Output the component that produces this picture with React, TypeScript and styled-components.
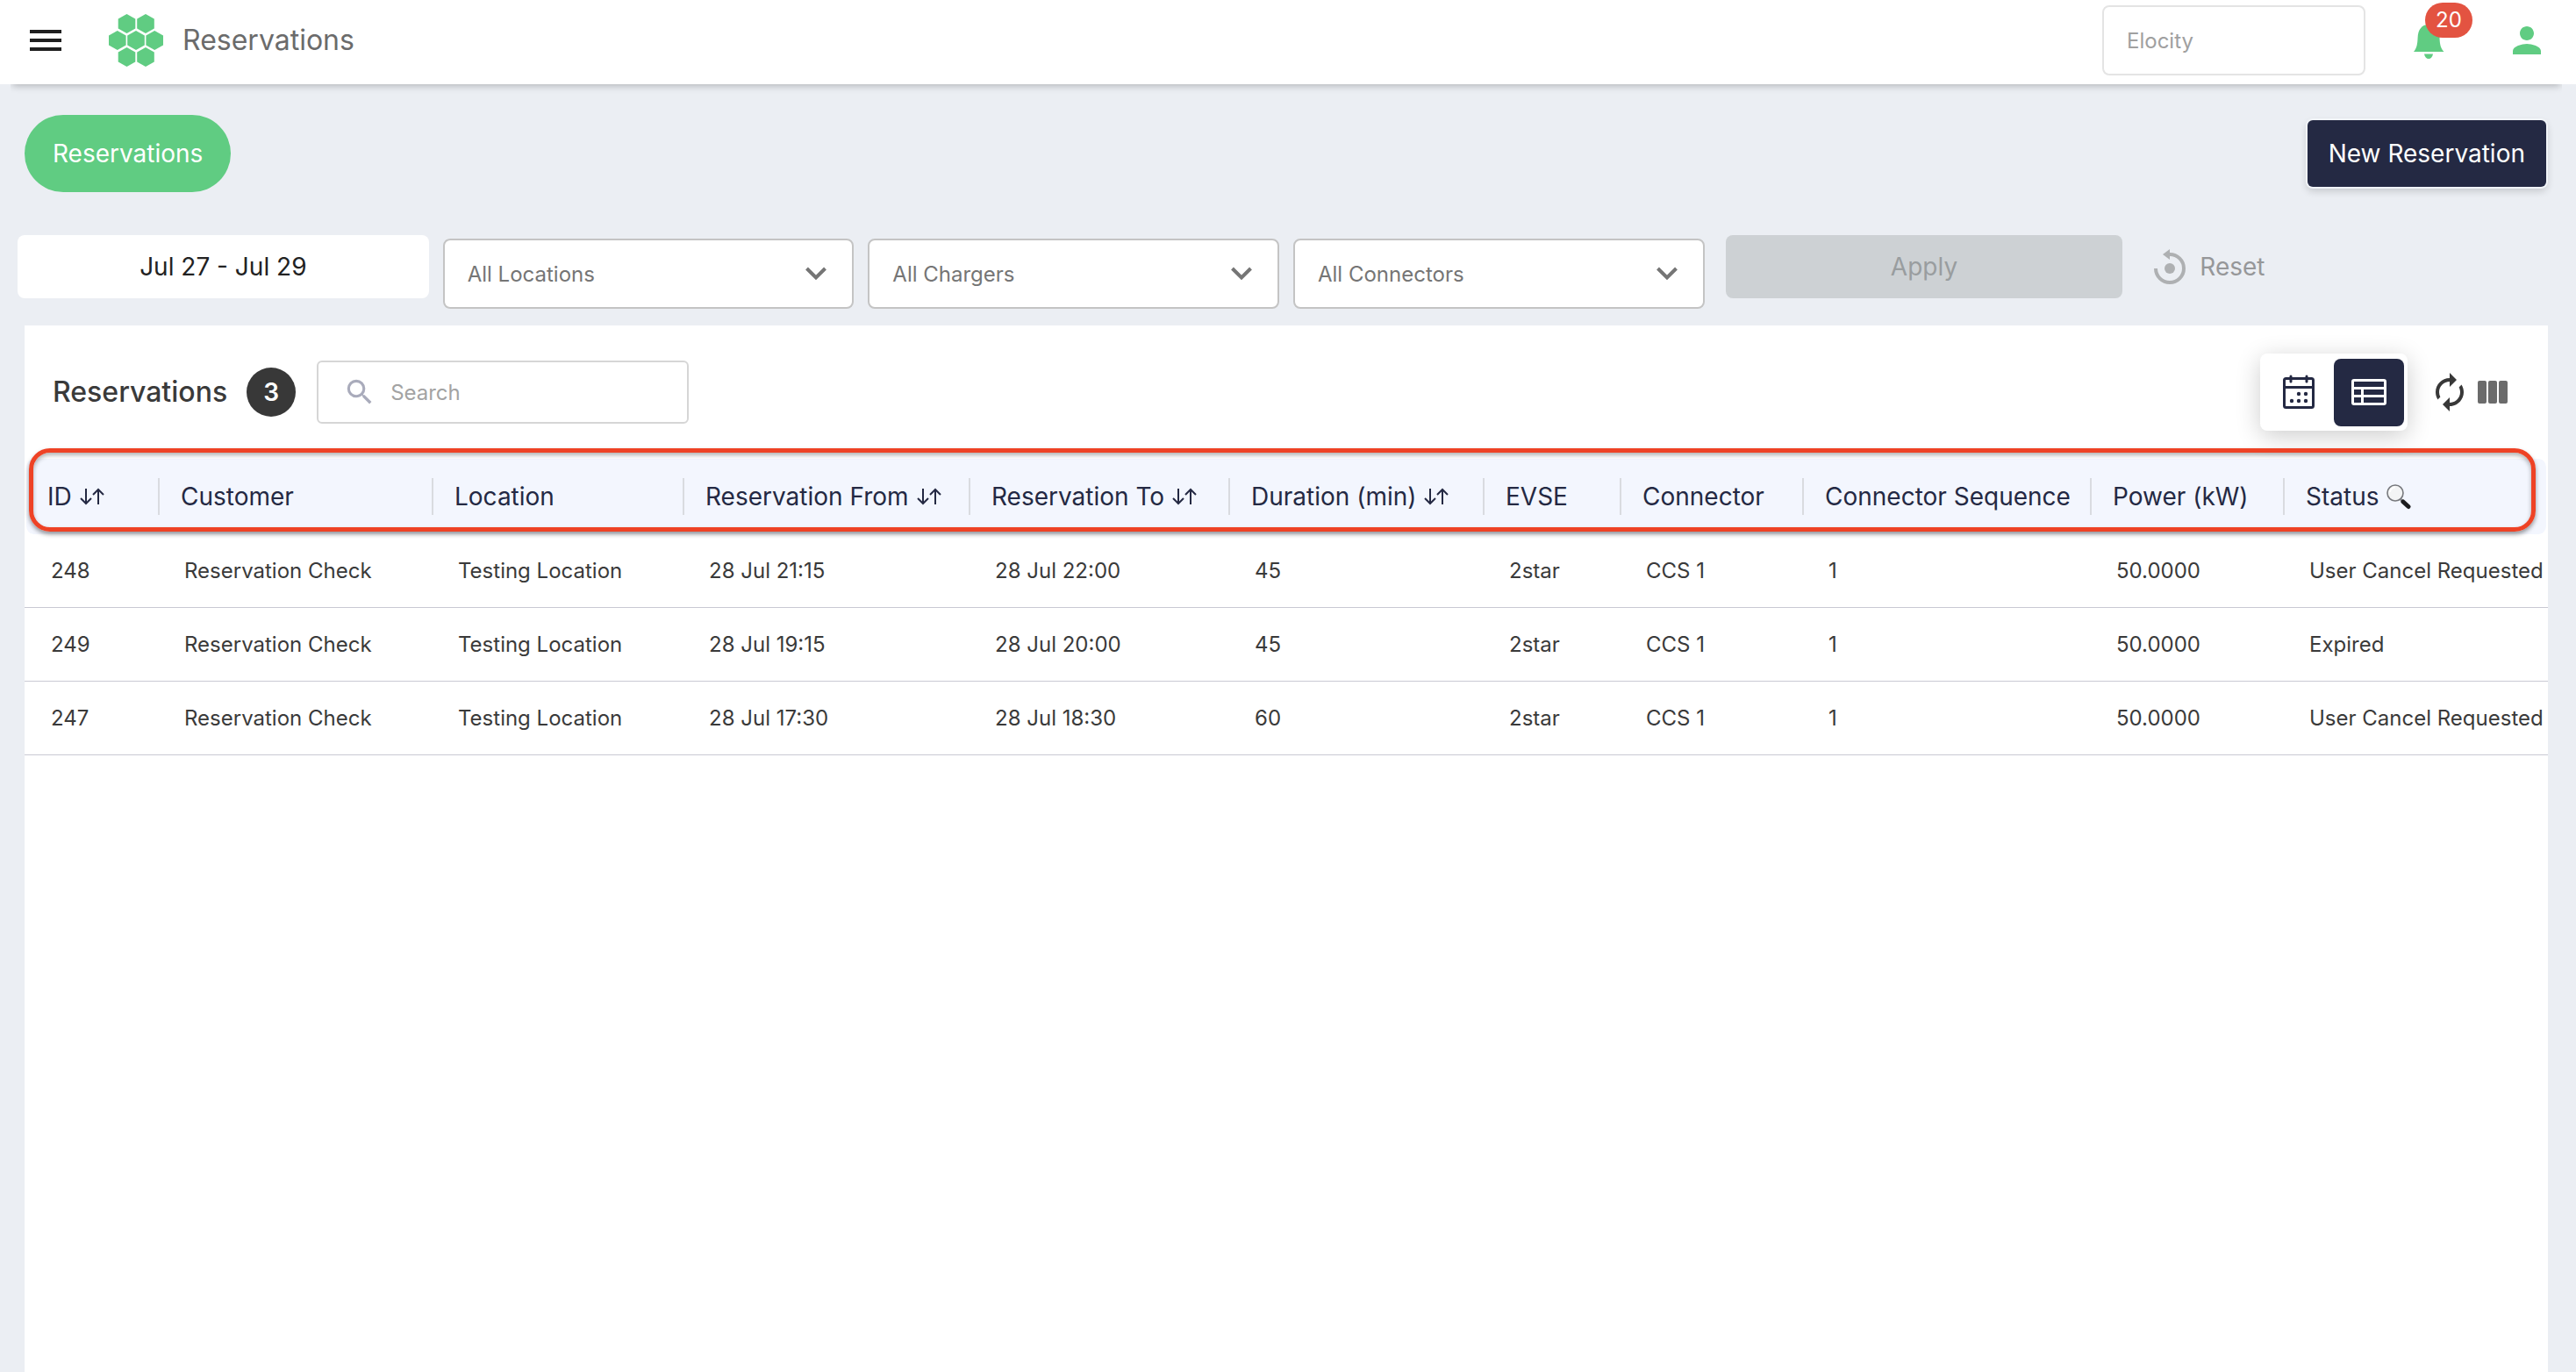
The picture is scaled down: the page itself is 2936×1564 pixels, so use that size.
import React from "react";
import styled, { createGlobalStyle } from "styled-components";
import { MdMenu, MdPerson, MdSearch, MdAutorenew } from "react-icons/md";

const color = {
  page: "#ebeef3",
  green: "#60cc82",
  navy: "#242943",
  red: "#e35341",
  outline: "#ee4225",
  ink: "#3a3a3a",
  headerRow: "#f3f6fe",
  line: "#c9c9d3",
};

const GlobalStyle = createGlobalStyle`
  *, *::before, *::after { box-sizing: border-box; }
  body {
    margin: 0;
    background: ${color.page};
    font-family: Inter, "Liberation Sans", sans-serif;
    color: ${color.ink};
  }
  button, input, select { font-family: inherit; }
`;

const Page = styled.div`
  display: flex;
  flex-direction: column;
  min-height: 100vh;
`;

const Header = styled.header`
  padding: 0 16px 0 12px;
  background: #fff;
`;

const AppBar = styled.div`
  display: flex;
  align-items: center;
  height: 96px;
  padding: 0 16px 4px;
  background: #fff;
  box-shadow: 0 4px 8px -2px rgba(0, 0, 0, 0.24);
  clip-path: inset(0 0 -16px 0);
`;

const IconButton = styled.button<{ $tint: string }>`
  position: relative;
  display: flex;
  padding: 0;
  border: 0;
  background: none;
  color: ${(p) => p.$tint};
  cursor: pointer;
`;

const Brand = styled.div`
  display: flex;
  align-items: center;
  gap: 22px;
  margin-left: 48px;
`;

const PageTitle = styled.h1`
  margin: 0;
  font-size: 32px;
  line-height: 40px;
  font-weight: 400;
  color: #6b6b6b;
`;

const Account = styled.div`
  display: flex;
  align-items: center;
  margin-left: auto;
`;

const TenantInput = styled.input`
  width: 300px;
  height: 80px;
  margin-right: 48px;
  padding: 0 26px;
  border: 2px solid #e4e4e4;
  border-radius: 8px;
  background: #fff;
  font-size: 24px;
  &::placeholder { color: #a0a0a0; opacity: 1; }
`;

const Alerts = styled(IconButton)`
  margin-right: 64px;
`;

const AlertCount = styled.span`
  position: absolute;
  top: -19px;
  left: 20px;
  width: 54px;
  border-radius: 20px;
  background: ${color.red};
  color: #fff;
  font-size: 24px;
  line-height: 40px;
  text-align: center;
`;

const TabRow = styled.div`
  display: flex;
  align-items: center;
  justify-content: space-between;
  padding: 35px 34px 0 28px;
`;

const Tab = styled.button`
  height: 88px;
  padding: 0 32px;
  border: 0;
  border-radius: 44px;
  background: ${color.green};
  color: #fff;
  font-size: 28px;
`;

const NewButton = styled.button`
  height: 76px;
  padding: 0 24px;
  border: 0;
  border-radius: 6px;
  background: ${color.navy};
  color: #fff;
  font-size: 28px;
  box-shadow: 0 0 0 2px #f1f4f8, 0 4px 8px 1px rgba(0, 0, 0, 0.16);
`;

const Filters = styled.form`
  display: grid;
  grid-template-columns: repeat(6, 1fr);
  align-items: start;
  padding: 49px 16px 19px 12px;
`;

const FilterCell = styled.div<{ $inset?: number; $drop?: boolean }>`
  display: flex;
  align-items: center;
  padding: ${(p) => (p.$drop ? 4 : 0)}px ${(p) => p.$inset ?? 8}px 0;
`;

const DateButton = styled.button`
  width: 100%;
  height: 72px;
  border: 0;
  border-radius: 8px;
  background: #fff;
  color: #222;
  font-size: 28px;
`;

const SelectBox = styled.label`
  display: grid;
  grid-template-columns: 1fr auto;
  align-items: center;
  width: 100%;
  height: 80px;
  border: 2px solid #c4c4c4;
  border-radius: 8px;
  background: #fff;
  color: #757575;
  padding-right: 28px;
`;

const Select = styled.select`
  grid-area: 1 / 1 / 2 / 3;
  width: 100%;
  height: 76px;
  padding: 0 26px;
  border: 0;
  background: none;
  appearance: none;
  color: inherit;
  font-size: 24px;
`;

const Chevron = styled.svg`
  grid-area: 1 / 2;
  pointer-events: none;
`;

const ApplyButton = styled.button`
  width: 100%;
  height: 72px;
  border: 0;
  border-radius: 8px;
  background: #cdd1d4;
  color: #999d9f;
  font-size: 28px;
`;

const ResetButton = styled.button`
  display: flex;
  align-items: center;
  gap: 14px;
  height: 72px;
  padding: 0 4px;
  border: 0;
  background: none;
  color: #969799;
  font-size: 28px;
`;

const Panel = styled.main`
  flex: 1;
  margin: 0 32px 0 28px;
  background: #fff;
`;

const PanelBar = styled.div`
  display: flex;
  align-items: center;
  padding: 32px 46px 32px 32px;
`;

const PanelTitle = styled.h2`
  margin: 0;
  font-size: 32px;
  line-height: 40px;
  font-weight: 500;
`;

const Count = styled.span`
  width: 56px;
  margin: 0 24px 0 22px;
  border-radius: 50%;
  background: #383838;
  color: #fff;
  font-size: 28px;
  font-weight: 600;
  line-height: 56px;
  text-align: center;
`;

const SearchBox = styled.label`
  display: flex;
  align-items: center;
  gap: 16px;
  width: 424px;
  height: 72px;
  padding: 0 28px;
  border: 2px solid #d6d6d6;
  border-radius: 6px;
  color: #a9abbb;
`;

const SearchInput = styled.input`
  flex: 1;
  min-width: 0;
  padding: 0;
  border: 0;
  outline: 0;
  font-size: 24px;
  &::placeholder { color: #a3a3a3; opacity: 1; }
`;

const Tools = styled.div`
  display: flex;
  align-items: center;
  gap: 24px;
  margin-left: auto;
`;

const ViewSwitch = styled.div`
  display: flex;
  align-items: center;
  height: 88px;
  padding: 4px;
  border-radius: 8px;
  background: #fff;
  box-shadow: 0 6px 28px rgba(0, 0, 0, 0.2);
`;

const ViewButton = styled.button<{ $active?: boolean }>`
  display: flex;
  align-items: center;
  justify-content: center;
  width: 80px;
  height: 77px;
  padding: 0;
  border: 0;
  border-radius: 8px;
  background: ${(p) => (p.$active ? color.navy : "transparent")};
  color: ${(p) => (p.$active ? "#fff" : color.navy)};
`;

const ToolPair = styled.div`
  display: flex;
  align-items: center;
  gap: 8px;
`;

const TableArea = styled.div`
  position: relative;
`;

const Highlight = styled.div`
  position: absolute;
  top: -12px;
  left: 5px;
  right: 14px;
  height: 95px;
  border: 5px solid ${color.outline};
  border-radius: 24px;
  box-shadow: 0 3px 5px rgba(0, 0, 0, 0.4), inset 0 3px 5px rgba(0, 0, 0, 0.3);
  pointer-events: none;
`;

const Table = styled.table`
  width: 100%;
  table-layout: fixed;
  border-collapse: separate;
  border-spacing: 0;
`;

const HeadCell = styled.th`
  height: 86px;
  padding: 0;
  background: ${color.headerRow};
  background-clip: padding-box;
  color: ${color.navy};
  font-size: 28px;
  font-weight: 400;
  text-align: left;
  white-space: nowrap;
  &:first-child { border-left: 2px solid transparent; border-radius: 10px 0 0 10px; }
  &:last-child { border-right: 2px solid transparent; border-radius: 0 10px 10px 0; }
`;

const HeadLabel = styled.div<{ $divided: boolean }>`
  display: flex;
  align-items: center;
  gap: 8px;
  height: 42px;
  padding-left: 24px;
  border-left: ${(p) => (p.$divided ? "2px solid #d9dbe0" : "0")};
`;

const SortButton = styled.button`
  display: flex;
  padding: 0;
  border: 0;
  background: none;
  color: inherit;
`;

const Cell = styled.td`
  height: 84px;
  padding: 0 0 0 30px;
  border-bottom: 1px solid ${color.line};
  font-size: 24px;
  white-space: nowrap;
`;

const HEXES = [[20.5, 11], [42, 11], [9.8, 30], [31, 30], [52.2, 30], [20.5, 49], [42, 49]];

function Logo() {
  return (
    <svg width="62" height="60" viewBox="0 0 62 60" fill={color.green} aria-hidden="true">
      {HEXES.map(([x, y]) => (
        <path key={`${x}-${y}`} d={`M${x} ${y - 11}l9.8 5.6v10.8l-9.8 5.6l-9.8-5.6v-10.8z`} />
      ))}
    </svg>
  );
}

function BellIcon() {
  return (
    <svg width="48" height="48" viewBox="0 0 48 48" fill="currentColor" aria-hidden="true">
      <path d="M24 6C16 6 12 12 11.600 21C11.300 28 10.500 33 7 37H41.500C37.500 33 36.800 28 36.500 21C36 12 32 6 24 6Z" />
      <path d="M19 39.500H29C28.500 43 26.500 45 24 45S19.500 43 19 39.500Z" />
    </svg>
  );
}

function ResetIcon() {
  return (
    <svg width="40" height="40" viewBox="0 0 40 40" aria-hidden="true">
      <path d="M20 6A16 16 0 1 1 4 22" fill="none" stroke="#aeb0b2" strokeWidth="4" />
      <path d="M20 0V12L12 6Z" fill="#aeb0b2" />
      <circle cx="20" cy="22" r="6" fill="#aeb0b2" />
    </svg>
  );
}

function CalendarIcon() {
  const dots = [[18, 22], [26, 22], [10, 30], [18, 30], [26, 30]];
  return (
    <svg width="36" height="40" viewBox="0 0 36 40" fill="none" stroke="currentColor" aria-hidden="true">
      <rect x="1.500" y="4.500" width="33" height="33" rx="2" strokeWidth="3" />
      <path d="M1.500 14.500H34.500" strokeWidth="3" />
      <path d="M9 2V8M27 2V8" strokeWidth="3" strokeLinecap="round" />
      {dots.map(([x, y]) => (
        <circle key={`${x}-${y}`} cx={x} cy={y} r="2.200" fill="currentColor" stroke="none" />
      ))}
    </svg>
  );
}

function TableIcon() {
  return (
    <svg width="40" height="30" viewBox="0 0 40 30" fill="none" stroke="currentColor" strokeWidth="3" aria-hidden="true">
      <rect x="1.500" y="1.500" width="37" height="27" rx="1.500" />
      <path d="M2 10.500H38M2 19.500H38M12.500 10.500V28" />
    </svg>
  );
}

function ColumnsIcon() {
  return (
    <svg width="34" height="26" viewBox="0 0 34 26" fill="currentColor" aria-hidden="true">
      <rect width="10" height="26" rx="2" />
      <rect x="12" width="10" height="26" rx="2" />
      <rect x="24" width="10" height="26" rx="2" />
    </svg>
  );
}

function SortIcon() {
  return (
    <svg width="30" height="20" viewBox="0 0 30 20" fill="none" stroke="currentColor" strokeWidth="2" aria-hidden="true">
      <path d="M8 1V18M2 12L8 18L14 12" />
      <path d="M22 19V2M16 8L22 2L28 8" />
    </svg>
  );
}

function LensIcon() {
  return (
    <svg width="30" height="30" viewBox="0 0 30 30" aria-hidden="true">
      <path d="M16.500 17.500L20 21" stroke="#8d9096" strokeWidth="3" />
      <path d="M20 21L26 26.500" stroke="#1c1c1e" strokeWidth="5" strokeLinecap="round" />
      <circle cx="11" cy="11" r="9" fill="#f3f4f5" stroke="#77797d" strokeWidth="1.600" />
      <path d="M5 10A6 6 0 0 1 11 4.500" fill="none" stroke="#fff" strokeWidth="2" />
    </svg>
  );
}

type Column = { label: string; width: number; sortable?: boolean; filterable?: boolean };

const COLUMNS: Column[] = [
  { label: "ID", width: 152, sortable: true },
  { label: "Customer", width: 312 },
  { label: "Location", width: 286 },
  { label: "Reservation From", width: 326, sortable: true },
  { label: "Reservation To", width: 296, sortable: true },
  { label: "Duration (min)", width: 290, sortable: true },
  { label: "EVSE", width: 156 },
  { label: "Connector", width: 208 },
  { label: "Connector Sequence", width: 328 },
  { label: "Power (kW)", width: 220 },
  { label: "Status", width: 302, filterable: true },
];

const ROWS = [
  ["248", "Reservation Check", "Testing Location", "28 Jul 21:15", "28 Jul 22:00", "45", "2star", "CCS 1", "1", "50.0000", "User Cancel Requested"],
  ["249", "Reservation Check", "Testing Location", "28 Jul 19:15", "28 Jul 20:00", "45", "2star", "CCS 1", "1", "50.0000", "Expired"],
  ["247", "Reservation Check", "Testing Location", "28 Jul 17:30", "28 Jul 18:30", "60", "2star", "CCS 1", "1", "50.0000", "User Cancel Requested"],
];

const Col = styled.col<{ $width: number }>`
  width: ${(p) => p.$width}px;
`;

function FilterSelect({ label }: { label: string }) {
  return (
    <FilterCell $drop>
      <SelectBox>
        <Select aria-label={label}>
          <option>{label}</option>
        </Select>
        <Chevron width="26" height="18" viewBox="0 0 26 18" fill="none" stroke="currentColor" strokeWidth="4" aria-hidden="true">
          <path d="M2.500 3L13 13.500L23.500 3" />
        </Chevron>
      </SelectBox>
    </FilterCell>
  );
}

export default function App() {
  return (
    <>
      <GlobalStyle />
      <Page>
        <Header>
          <AppBar>
            <IconButton $tint="#1f1f1f" aria-label="Open menu"><MdMenu size={48} /></IconButton>
            <Brand>
              <Logo />
              <PageTitle>Reservations</PageTitle>
            </Brand>
            <Account>
              <TenantInput placeholder="Elocity" aria-label="Tenant" />
              <Alerts $tint={color.green} aria-label="Notifications">
                <BellIcon />
                <AlertCount>20</AlertCount>
              </Alerts>
              <IconButton $tint={color.green} aria-label="Profile"><MdPerson size={48} /></IconButton>
            </Account>
          </AppBar>
        </Header>

        <TabRow>
          <Tab>Reservations</Tab>
          <NewButton>New Reservation</NewButton>
        </TabRow>

        <Filters onSubmit={(e) => e.preventDefault()}>
          <FilterCell><DateButton type="button">Jul 27 - Jul 29</DateButton></FilterCell>
          <FilterSelect label="All Locations" />
          <FilterSelect label="All Chargers" />
          <FilterSelect label="All Connectors" />
          <FilterCell $inset={16}><ApplyButton disabled>Apply</ApplyButton></FilterCell>
          <FilterCell $inset={14}><ResetButton type="reset"><ResetIcon />Reset</ResetButton></FilterCell>
        </Filters>

        <Panel>
          <PanelBar>
            <PanelTitle>Reservations</PanelTitle>
            <Count>3</Count>
            <SearchBox>
              <MdSearch size={38} />
              <SearchInput placeholder="Search" aria-label="Search" />
            </SearchBox>
            <Tools>
              <ViewSwitch>
                <ViewButton aria-label="Calendar view"><CalendarIcon /></ViewButton>
                <ViewButton $active aria-label="Table view"><TableIcon /></ViewButton>
              </ViewSwitch>
              <ToolPair>
                <IconButton $tint="#383838" aria-label="Refresh"><MdAutorenew size={48} /></IconButton>
                <IconButton $tint="#6b6b6b" aria-label="Choose columns"><ColumnsIcon /></IconButton>
              </ToolPair>
            </Tools>
          </PanelBar>

          <TableArea>
            <Table>
              <colgroup>
                {COLUMNS.map((c) => <Col key={c.label} $width={c.width} />)}
              </colgroup>
              <thead>
                <tr>
                  {COLUMNS.map((c, i) => (
                    <HeadCell key={c.label} scope="col">
                      <HeadLabel $divided={i > 0}>
                        {c.label}
                        {c.sortable && <SortButton aria-label={`Sort by ${c.label}`}><SortIcon /></SortButton>}
                        {c.filterable && <SortButton aria-label={`Filter by ${c.label}`}><LensIcon /></SortButton>}
                      </HeadLabel>
                    </HeadCell>
                  ))}
                </tr>
              </thead>
              <tbody>
                {ROWS.map((row) => (
                  <tr key={row[0]}>
                    {row.map((value, i) => <Cell key={COLUMNS[i].label}>{value}</Cell>)}
                  </tr>
                ))}
              </tbody>
            </Table>
            <Highlight />
          </TableArea>
        </Panel>
      </Page>
    </>
  );
}
